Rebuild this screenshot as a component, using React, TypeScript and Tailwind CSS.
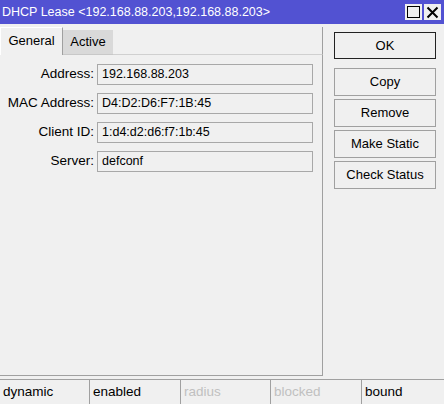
import React from "react";

const fields = [
  { label: "Address:", value: "192.168.88.203" },
  { label: "MAC Address:", value: "D4:D2:D6:F7:1B:45" },
  { label: "Client ID:", value: "1:d4:d2:d6:f7:1b:45" },
  { label: "Server:", value: "defconf" },
];

const buttons = ["Copy", "Remove", "Make Static", "Check Status"];

const status = [
  { text: "dynamic", w: "w-[89px]", muted: false },
  { text: "enabled", w: "w-[91px]", muted: false },
  { text: "radius", w: "w-[90px]", muted: true },
  { text: "blocked", w: "w-[91px]", muted: true },
  { text: "bound", w: "flex-1", muted: false },
];

export default function App() {
  return (
    <div
      className="w-[444px] h-[404px] bg-[#f0f0f0] flex flex-col text-[13px] text-black overflow-hidden"
      style={{ fontFamily: '"Liberation Sans", Arial, sans-serif' }}
    >
      {/* Title bar */}
      <div className="h-[24px] bg-[#5252d2] flex items-center pl-[2px] pr-[3px]">
        <span className="text-white text-[12.5px] flex-1 whitespace-nowrap">
          DHCP Lease &lt;192.168.88.203,192.168.88.203&gt;
        </span>
        <div className="flex gap-[2px]">
          <div className="w-[17px] h-[16px] bg-[#f0f0f0] flex items-center justify-center">
            <div className="w-[13px] h-[12px] border border-black" />
          </div>
          <div className="w-[17px] h-[16px] bg-[#f0f0f0] flex items-center justify-center">
            <svg width="13" height="13" viewBox="0 0 13 13">
              <path d="M1.5 1.5 L11.5 11.5 M11.5 1.5 L1.5 11.5" stroke="black" strokeWidth="2" />
            </svg>
          </div>
        </div>
      </div>

      <div className="flex flex-1">
        {/* Left: tabs + panel */}
        <div className="w-[323px] flex flex-col pt-[3px]">
          <div className="h-[28px] flex items-end">
            <div className="h-[28px] w-[63px] border-t border-l border-white border-r border-r-[#a0a0a0] flex items-center justify-center pb-[2px]">
              General
            </div>
            <div className="h-[25px] w-[50px] bg-[#d9d9d9] border-b border-[#c8c8c8] flex items-center justify-center">
              Active
            </div>
            <div className="flex-1 h-full border-b border-[#d0d0d0] border-r border-r-[#a0a0a0]" />
          </div>
          <div className="flex-1 border-r border-b border-[#a0a0a0] flex flex-col gap-[8px] pt-[9px] mb-[3px]">
            {fields.map((f) => (
              <div key={f.label} className="flex items-center">
                <div className="w-[97px] text-right text-[13.5px] pr-[3px] whitespace-nowrap">{f.label}</div>
                <div className="w-[216px] h-[21px] border border-[#a8a8a8] bg-[#f0f0f0] flex items-center px-[4px] text-[12.5px] whitespace-nowrap">
                  {f.value}
                </div>
              </div>
            ))}
          </div>
        </div>

        {/* Right: buttons */}
        <div className="flex-1 flex flex-col pl-[11px] pt-[8px]">
          <div className="w-[102px] h-[27px] border border-[#222] flex items-center justify-center bg-[#f0f0f0]">
            OK
          </div>
          <div className="flex flex-col gap-[3px] mt-[9px]">
            {buttons.map((b) => (
              <div
                key={b}
                className="w-[102px] h-[28px] border border-[#a0a0a0] flex items-center justify-center bg-[#f0f0f0] whitespace-nowrap"
              >
                {b}
              </div>
            ))}
          </div>
        </div>
      </div>

      {/* Status bar */}
      <div className="h-[25px] flex text-[13.5px]">
        {status.map((s, i) => (
          <div
            key={s.text}
            className={`${s.w} h-full border-t border-[#a0a0a0] ${i > 0 ? "border-l" : ""} flex items-center pl-[3px] ${
              s.muted ? "text-[#c0c0c0]" : "text-black"
            }`}
          >
            {s.text}
          </div>
        ))}
      </div>
    </div>
  );
}
